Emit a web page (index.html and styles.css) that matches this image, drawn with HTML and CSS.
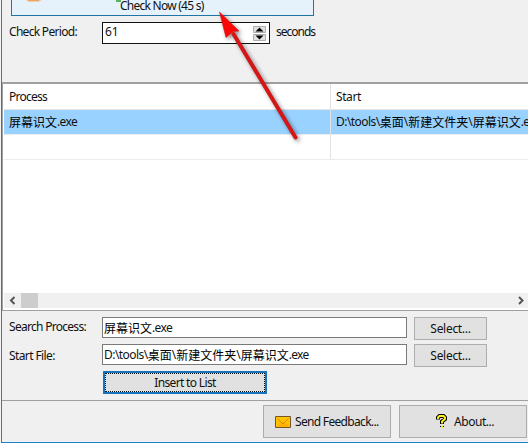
FILE: index.html
```
<!DOCTYPE html>
<html lang="en">
<head>
<meta charset="utf-8">
<title>Process watcher</title>
<link rel="stylesheet" href="styles.css">
</head>
<body>
<main class="window">
  <section class="settings">
    <button class="check">
      <svg class="check-icons" width="301" height="5" viewBox="0 0 301 5"><path d="M14 0h16l-3 2H17z" fill="#e8ceb4"/><path d="M16 0h11v1H16z" fill="#eda55c"/><path d="M104 0h5v2h-5z" fill="#5ab35e"/></svg>
      <span class="t-check">Check Now (45 s)</span>
    </button>
    <div class="period">
      <label class="label t-period">Check Period:</label>
      <div class="number"><span>61</span>
        <svg width="13" height="15" viewBox="0 0 13 15"><path d="M.5.5h12v6H.5zM.5 8.500h12v6H.5z" fill="#e1e1e1" stroke="#adadad"/><path d="M2.500 5.500h8L6.500 1.500zM2.500 9.500h8l-4 4z" fill="#000"/></svg>
      </div>
      <span class="t-seconds">seconds</span>
    </div>
  </section>
  <section class="list">
    <div class="row head"><div class="cell"><span class="t-process">Process</span></div><div class="cell"><span class="t-start">Start</span></div></div>
    <div class="row selected"><div class="cell"><span class="cjk">屏幕识文</span><span class="t-exe">.exe</span></div><div class="cell"><span class="t-d">D:\tools\</span><span class="cjk">桌面</span><span class="sl">\</span><span class="cjk">新建文件夹</span><span class="sl">\</span><span class="cjk">屏幕识文</span><span class="t-exe">.exe</span></div></div>
    <div class="row"><div class="cell"></div><div class="cell"></div></div>
    <div class="space"></div>
    <div class="scroll">
      <svg width="17" height="15" viewBox="0 0 17 15"><path d="M10.500 4L7 7.500l3.500 3.500" fill="none" stroke="#555" stroke-width="2"/></svg>
      <i class="thumb"></i>
      <svg class="right" width="17" height="15" viewBox="0 0 17 15"><path d="M8 4l3.500 3.500L8 11" fill="none" stroke="#555" stroke-width="2"/></svg>
    </div>
  </section>
  <section class="form">
    <div class="field"><label class="label t-search">Search Process:</label><div class="input"><span class="cjk">屏幕识文</span><span class="t-exe">.exe</span></div><button class="btn"><span class="t-select">Select...</span></button></div>
    <div class="field"><label class="label t-file">Start File:</label><div class="input"><span class="t-d">D:\tools\</span><span class="cjk">桌面</span><span class="sl">\</span><span class="cjk">新建文件夹</span><span class="sl">\</span><span class="cjk">屏幕识文</span><span class="t-exe">.exe</span></div><button class="btn"><span class="t-select">Select...</span></button></div>
    <button class="insert"><span class="t-insert">Insert to List</span></button>
  </section>
  <footer class="footer">
    <button class="btn big send">
      <svg width="16" height="12" viewBox="0 0 16 12"><path d="M.5.5h15v11H.5z" fill="#ffc400" stroke="#76552b"/><path d="M1 11l5-4.500h4L15 11z" fill="#ffb000"/><path d="M2.500 2.500L8 8l5.500-5.500" fill="none" stroke="#db8500"/></svg>
      <span class="t-send">Send Feedback...</span>
    </button>
    <button class="btn big about">
      <svg width="11" height="15" viewBox="0 0 11 15"><path d="M2 5.500V3.500L3.500 2h4L9 3.500V5L6 7.500V10M6 12v1" fill="none" stroke="#000" stroke-width="4"/><path d="M2 5V3.500L3.500 2h4L9 3.500V5L6 7.500v2M6 11.500v2.500" fill="none" stroke="#fff01c" stroke-width="1.900"/></svg>
      <span class="t-about">About...</span>
    </button>
  </footer>
  <svg class="arrow" width="110" height="150" viewBox="0 0 110 150"><path d="M24.500 34L86.500 137.500" stroke="#d31616" stroke-width="4" stroke-linecap="round"/><path d="M10.500 12L30 31l-6 .5-3.500 3L17 37.500z" fill="#fb0505" stroke="#d31616" stroke-width=".6"/></svg>
</main>
</body>
</html>
```

FILE: styles.css
```
* { box-sizing: border-box; }
body {
  margin: 0;
  width: 528px;
  height: 443px;
  overflow: hidden;
  background: #f4f4f4;
  font: 12px/16px "Noto Sans", "Noto Sans CJK SC", sans-serif;
  color: #111;
}
button { font: inherit; color: inherit; margin: 0; padding: 0; }
span { white-space: pre; }
svg { display: block; flex: none; }
.window {
  position: relative;
  margin-left: 1px;
  width: 527px;
  height: 443px;
  display: flex;
  flex-direction: column;
  overflow: hidden;
  background: #f0f0f0;
  border-left: 1px solid #2a7fae;
  border-bottom: 1px solid #1883c7;
}
.settings { height: 82px; flex: none; }
.check {
  display: flex;
  flex-direction: column;
  align-items: flex-start;
  width: 303px;
  height: 16px;
  margin-left: 9px;
  background: #e5f1fb;
  border: 1px solid #2175a4;
  border-top: 0;
}
.check-icons { margin-bottom: -6px; }
.check span { margin-left: 108px; line-height: 14px; }
.period { display: flex; align-items: center; height: 22px; margin-top: 6px; }
.period span, .period label { position: relative; top: -1px; }
.label { width: 100px; padding-left: 7px; flex: none; white-space: nowrap; }
.number {
  display: flex;
  align-items: center;
  justify-content: space-between;
  width: 168px;
  height: 22px;
  margin-right: 6px;
  padding: 0 3px 0 2px;
  background: #fff;
  border: 1px solid #111;
}
.list {
  height: 229px;
  flex: none;
  display: flex;
  flex-direction: column;
  background: #fff;
  border-top: 2px solid #a0a0a0;
  border-left: 1px solid #a0a0a0;
  border-bottom: 1px solid #a0a0a0;
  padding-left: 1px;
}
.row { display: grid; grid-template-columns: 327px 1fr; height: 25px; flex: none; border-bottom: 1px solid #ececec; }
.head { height: 26px; border-bottom-color: #e5e5e5; }
.cell { display: flex; align-items: center; padding-left: 5px; overflow: hidden; border-right: 1px solid #e2e2e2; }
.cell:last-child { border-right: 0; }
.head .cell { padding-top: 1px; }
.selected { background: #99d1ff; }
.space { flex: 1; }
.scroll { display: flex; height: 15px; margin-bottom: 2px; background: #f0f0f0; }
.thumb { width: 17px; background: #cdcdcd; }
.right { margin-left: auto; }
.form { height: 90px; flex: none; padding-top: 6px; border-bottom: 1px solid #a0a0a0; }
.field { display: flex; height: 23px; margin-bottom: 4px; }
.field .label { padding-top: 2px; }
.field + .field .label { padding-top: 4px; }
.input {
  display: flex;
  align-items: center;
  width: 305px;
  height: 21px;
  margin-right: 7px;
  padding-left: 1px;
  background: #fff;
  border: 1px solid #7a7a7a;
}
.btn {
  display: flex;
  align-items: center;
  justify-content: center;
  width: 73px;
  height: 23px;
  background: #e1e1e1;
  border: 1px solid #adadad;
}
.insert {
  display: block;
  width: 164px;
  height: 23px;
  margin-left: 101px;
  margin-top: 1px;
  background: #e1e1e1;
  border: 2px solid #1874bd;
  outline: 1px dotted #111;
  outline-offset: -3px;
}
.footer { display: flex; gap: 8px; padding: 4px 0 0 261px; }
.big { width: 128px; height: 33px; flex: none; }
.send { gap: 4px; justify-content: flex-start; padding-left: 11px; }
.about { gap: 7px; justify-content: flex-start; padding-left: 36px; }
.arrow { position: absolute; left: 207px; top: 0; filter: drop-shadow(2px 2px 2px rgba(0, 0, 0, .45)); }
.cjk { font: 12px/16px "Noto Sans CJK SC", sans-serif; color: #000; }
.t-check { letter-spacing: -.75px; }
.t-period { letter-spacing: -.7px; }
.t-seconds { letter-spacing: -1px; }
.t-process { letter-spacing: -.75px; }
.t-start { letter-spacing: -.4px; }
.t-search { letter-spacing: -.71px; }
.t-file { letter-spacing: -.6px; }
.t-exe { letter-spacing: -.65px; }
.t-d { letter-spacing: -.55px; }
.t-select { letter-spacing: -.3px; }
.t-insert { letter-spacing: -.66px; }
.t-send { letter-spacing: -.68px; }
.t-about { letter-spacing: -.45px; }
```
